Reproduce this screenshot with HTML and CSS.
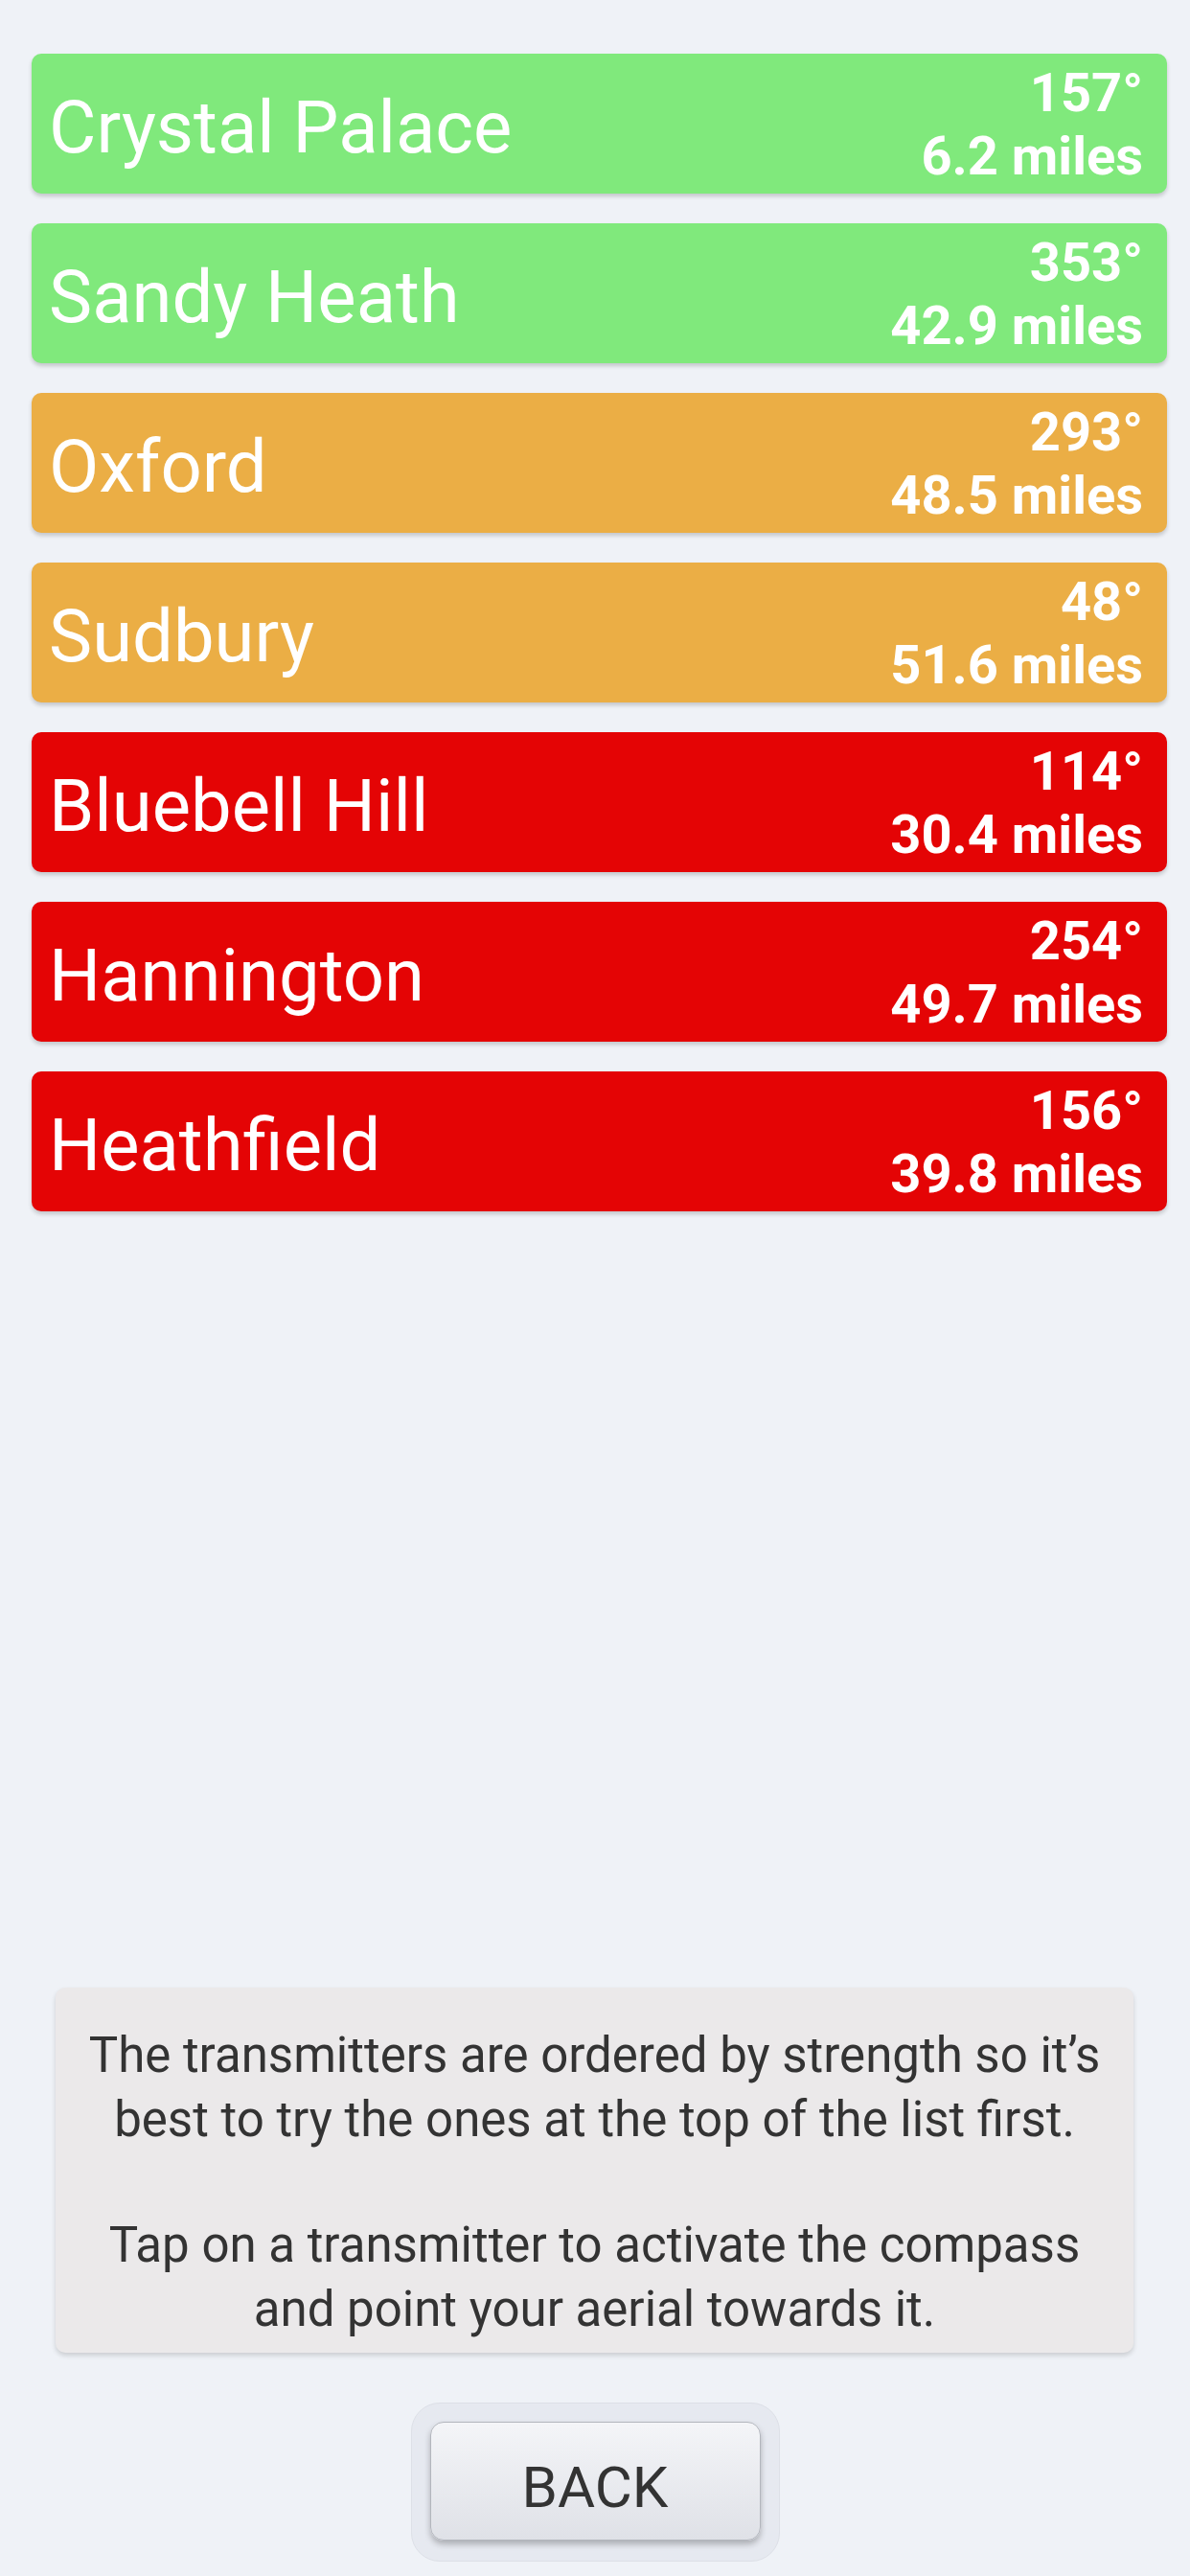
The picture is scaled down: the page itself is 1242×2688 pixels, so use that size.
FILE: index.html
```html
<html>
<head>
<meta charset="UTF-8">
<link rel="stylesheet" href="styles.css">
</head>
<body>
<div class="page">
<ul class="list">
<li class="item good">
<span class="name">Crystal Palace</span>
<span class="info">157°<br>6.2 miles</span>
</li>
<li class="item good">
<span class="name">Sandy Heath</span>
<span class="info">353°<br>42.9 miles</span>
</li>
<li class="item ok">
<span class="name">Oxford</span>
<span class="info">293°<br>48.5 miles</span>
</li>
<li class="item ok">
<span class="name">Sudbury</span>
<span class="info">48°<br>51.6 miles</span>
</li>
<li class="item bad">
<span class="name">Bluebell Hill</span>
<span class="info">114°<br>30.4 miles</span>
</li>
<li class="item bad">
<span class="name">Hannington</span>
<span class="info">254°<br>49.7 miles</span>
</li>
<li class="item bad">
<span class="name">Heathfield</span>
<span class="info">156°<br>39.8 miles</span>
</li>
</ul>
<div class="hint">
<p>The transmitters are ordered by strength so it’s best to try the ones at the top of the list first.</p>
<p>Tap on a transmitter to activate the compass and point your aerial towards it.</p>
</div>
<div class="back-wrap">
<button class="back">BACK</button>
</div>
</div>
</body>
</html>
```

FILE: styles.css
```css
*{
margin:0;
padding:0;
box-sizing:border-box;
}
body{
background:#eff2f7;
font-family:Roboto,"Liberation Sans",sans-serif;
}
.page{
min-height:2688px;
display:flex;
flex-direction:column;
}
.list{
list-style:none;
padding:56px 24px 0 33px;
display:flex;
flex-direction:column;
gap:31px;
}
.item{
display:flex;
justify-content:space-between;
align-items:center;
height:146px;
padding:8px 25px 6px 18px;
border-radius:10px;
color:#fff;
box-shadow:0 3px 4px rgba(0,0,0,0.18);
}
.good{background:#80e97c;}
.ok{background:#ebae45;}
.bad{background:#e40405;}
.name{
font-size:76px;
line-height:76px;
padding-top:6px;
}
.info{
font-size:56px;
font-weight:bold;
line-height:66px;
text-align:right;
}
.hint{
margin:auto 59px 0 58px;
padding:37px 28px 12px;
background:#ebe9ea;
border-radius:10px;
box-shadow:0 3px 5px rgba(0,0,0,0.15);
color:#333;
font-size:51px;
line-height:67px;
text-align:center;
}
.hint p+p{
margin-top:64px;
}
.back-wrap{
align-self:center;
margin:52px 0 15px;
padding:19px 19px 21px;
background:#e6e9f0;
border:1px solid #dde0e7;
border-radius:30px;
}
.back{
display:block;
width:345px;
height:124px;
padding-top:12px;
border:1px solid #b3b6bd;
border-radius:14px;
background:linear-gradient(#f4f5f8,#dfe1e7);
box-shadow:0 4px 6px rgba(0,0,0,0.25);
font-family:Roboto,"Liberation Sans",sans-serif;
font-size:60px;
color:#333;
}
```
